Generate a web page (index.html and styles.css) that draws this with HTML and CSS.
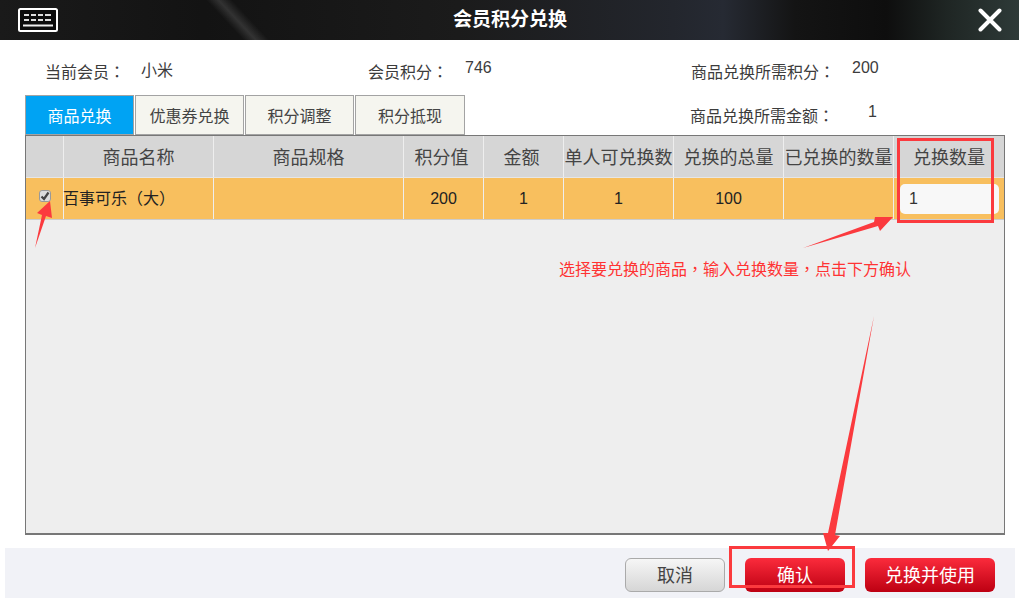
FILE: index.html
```html
<!DOCTYPE html>
<html lang="zh-CN">
<head>
<meta charset="utf-8">
<title>会员积分兑换</title>
<link rel="stylesheet" href="styles.css">
</head>
<body>
<div class="dialog">
  <header class="titlebar">
    <svg class="kbd" width="40" height="24" viewBox="0 0 40 24">
      <rect x="1" y="1" width="38" height="22" rx="1.5" fill="#0c0c0c" stroke="#fff" stroke-width="2"/>
      <path d="M6 7h5M13 7h5M20 7h5M27 7h6M6 12h5M13 12h5M20 12h5M27 12h6" stroke="#ddd" stroke-width="2"/>
      <path d="M5 17.500h30" stroke="#eee" stroke-width="2"/>
    </svg>
    <h1 class="title">会员积分兑换</h1>
    <svg class="close" width="24" height="24" viewBox="0 0 24 24">
      <path d="M2.500 2.500l19 19M21.500 2.500l-19 19" stroke="#fff" stroke-width="4" stroke-linecap="round"/>
    </svg>
  </header>

  <div class="info">
    <div class="field field-member"><span class="label">当前会员<span class="tc" lang="zh-TW">：</span></span><span class="value name-value">小米</span></div>
    <div class="field field-points"><span class="label">会员积分<span class="tc" lang="zh-TW">：</span></span><span class="value">746</span></div>
    <div class="field field-need"><span class="label">商品兑换所需积分<span class="tc" lang="zh-TW">：</span></span><span class="value">200</span></div>
  </div>

  <div class="tabrow">
    <nav class="tabs">
      <a class="tab active">商品兑换</a>
      <a class="tab">优惠券兑换</a>
      <a class="tab">积分调整</a>
      <a class="tab">积分抵现</a>
    </nav>
    <div class="field field-money"><span class="label">商品兑换所需金额<span class="tc" lang="zh-TW">：</span></span><span class="value">1</span></div>
  </div>

  <section class="panel">
    <div class="row head">
      <div class="cell"></div>
      <div class="cell">商品名称</div>
      <div class="cell">商品规格</div>
      <div class="cell nudge">积分值</div>
      <div class="cell nudge">金额</div>
      <div class="cell">单人可兑换数</div>
      <div class="cell">兑换的总量</div>
      <div class="cell">已兑换的数量</div>
      <div class="cell last">兑换数量</div>
    </div>
    <div class="row item">
      <div class="cell"><span class="check"><svg width="10" height="10" viewBox="0 0 10 10"><path d="M1.500 5.500l2.500 2.500 4.500-6.500" fill="none" stroke="#444" stroke-width="2.200"/></svg></span></div>
      <div class="cell name"><span class="name-text">百事可乐<span class="tc" lang="zh-TW">（</span>大<span class="tc" lang="zh-TW">）</span></span></div>
      <div class="cell"></div>
      <div class="cell">200</div>
      <div class="cell">1</div>
      <div class="cell">1</div>
      <div class="cell">100</div>
      <div class="cell"></div>
      <div class="cell last left"><input class="qty" type="text" value="1"></div>
    </div>
  </section>

  <footer class="footer">
    <button class="btn cancel">取消</button>
    <button class="btn primary confirm">确认</button>
    <button class="btn primary use">兑换并使用</button>
  </footer>

  <p class="note">选择要兑换的商品<span class="tc" lang="zh-TW">，</span>输入兑换数量<span class="tc" lang="zh-TW">，</span>点击下方确认</p>
  <svg class="marks" width="1019" height="598" viewBox="0 0 1019 598">
    <rect x="898.500" y="139.500" width="94" height="82" fill="none" stroke="#fb3a3e" stroke-width="3"/>
    <rect x="730.500" y="547.500" width="123" height="39" fill="none" stroke="#fb3a3e" stroke-width="3"/>
    <polygon fill="#fb3a3e" points="35,248 42,215 37,213 50,201 52,218 46,216"/>
    <polygon fill="#fb3a3e" points="803,248 874,222 875,217 893,217 880,231 878,226"/>
    <polygon fill="#fb3a3e" points="874,316 835,535 840,536 828,551 823,533 828,533"/>
  </svg>
</div>
</body>
</html>
```
FILE: styles.css
```css
* { box-sizing: border-box; }
html, body { margin: 0; padding: 0; background: #fff; }
body {
  font-family: "Liberation Sans", "Noto Sans CJK SC", sans-serif;
  color: #333;
  overflow: hidden;
  text-spacing-trim: space-all;
}
.dialog { position: relative; width: 1019px; height: 598px; }
.tc { font-family: "Noto Sans CJK TC", sans-serif; line-height: 0; }

.titlebar {
  height: 40px;
  display: grid;
  grid-template-columns: 1fr auto 1fr;
  align-items: center;
  padding: 0 17px 0 18px;
  background:
    linear-gradient(47deg, transparent 178px, rgba(255,255,255,.13) 187px, transparent 197px),
    linear-gradient(90deg, #1a1a1a 0, #131313 20%, #1b1b1b 45%, #23262d 66%, #262a33 71%, #141414 78%, #0e0e0e 87%, #1f2624 93%, #2e3a38 100%);
}
.title {
  margin: 0;
  font-size: 19px;
  line-height: 40px;
  font-weight: 700;
  color: #fff;
}
.kbd, .close { display: block; }
.close { justify-self: end; }

.info { display: flex; height: 35px; padding: 20px 0 0 45px; }
.field { display: flex; align-items: flex-start; font-size: 16px; line-height: 16px; color: #3c3c3c; }
.field .label { padding-top: 5px; white-space: nowrap; }
.name-value { padding-top: 3px; }
.field-member, .field-points { width: 323px; }
.field-member .label { width: 96px; }
.field-points .label { width: 97px; }
.field-need .label { width: 161px; }
.field-money { margin-left: 225px; padding-top: 9px; }
.field-money .label { width: 178px; }

.tabrow { display: flex; height: 40px; margin: 20px 0 0 25px; }
.tabs { display: flex; gap: 1px; }
.tab {
  width: 109px;
  height: 40px;
  display: flex;
  align-items: center;
  justify-content: center;
  font-size: 16px;
  color: #444;
  background: #f5f5ef;
  border: 1px solid #a3a3a3;
}
.tab:last-child { width: 110px; }
.tab.active { background: #00a3f3; color: #fff; }

.panel {
  width: 980px;
  height: 400px;
  margin-left: 25px;
  background: #eee;
  border: 1px solid #777;
  border-width: 1px 1px 2px 1px;
}
.row {
  display: grid;
  grid-template-columns: 38px 150px 190px 80px 80px 110px 110px 110px 1fr;
  font-size: 16px;
}
.cell {
  display: flex;
  align-items: center;
  justify-content: center;
  border-right: 1px solid #eee;
  white-space: nowrap;
}
.cell.last { border-right: 0; }
.cell.left { justify-content: flex-start; }
.cell.nudge { padding-right: 4px; }
.head { height: 41px; background: #d6d6d6; color: #444; font-size: 18px; }
.head .cell { padding-bottom: 2px; }
.item { height: 43px; background: #f8bf5e; color: #222; border-top: 1px solid #e6e6e6; border-bottom: 1px solid #ccc; }
.name { justify-content: flex-start; padding-bottom: 3px; }
.name-text { margin-left: -1px; }
.check {
  width: 12px;
  height: 12px;
  margin-top: -6px;
  display: flex;
  align-items: center;
  justify-content: center;
  border: 1px solid #999;
  border-radius: 3px;
  background: #dcdcdc;
}
.qty {
  width: 99px;
  height: 30px;
  margin-left: 6px;
  padding: 0 0 0 9px;
  border: 0;
  border-radius: 5px;
  background: #f8f8f8;
  font: 16px "Liberation Sans", sans-serif;
  color: #333;
}

.footer {
  display: flex;
  justify-content: flex-end;
  gap: 20px;
  height: 50px;
  margin: 13px 4px 0 5px;
  padding: 10px 20px 6px 0;
  background: #f1f2f7;
}
.btn {
  height: 34px;
  padding: 0 0 2px;
  border-radius: 6px;
  font: 18px "Liberation Sans", "Noto Sans CJK SC", sans-serif;
}
.cancel {
  width: 100px;
  color: #444;
  border: 1px solid #aaa;
  background: linear-gradient(#f6f6f6, #d6d6d6);
}
.primary {
  color: #fff;
  border: 0;
  background: linear-gradient(#fb2b3c, #bd0012);
}
.confirm { width: 100px; }
.use { width: 130px; }

.note {
  position: absolute;
  left: 559px;
  top: 261px;
  margin: 0;
  font-size: 16px;
  line-height: 18px;
  color: #f33;
  white-space: nowrap;
}
.marks { position: absolute; left: 0; top: 0; pointer-events: none; }
```
